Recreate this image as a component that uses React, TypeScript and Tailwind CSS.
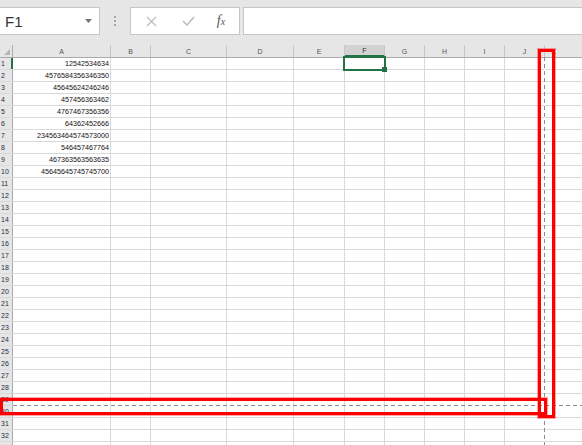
import React from "react";

const cols: { name: string; w: string }[] = [
  { name: "A", w: "w-[98px]" },
  { name: "B", w: "w-[40px]" },
  { name: "C", w: "w-[76px]" },
  { name: "D", w: "w-[67px]" },
  { name: "E", w: "w-[51px]" },
  { name: "F", w: "w-[40px]" },
  { name: "G", w: "w-[40px]" },
  { name: "H", w: "w-[40px]" },
  { name: "I", w: "w-[40px]" },
  { name: "J", w: "w-[40px]" },
];

const data: Record<number, string> = {
  1: "12542534634",
  2: "4576584356346350",
  3: "45645624246246",
  4: "457456363462",
  5: "4767467356356",
  6: "64362452666",
  7: "234563464574573000",
  8: "546457467764",
  9: "467363563563635",
  10: "45645645745745700",
};

const rows = Array.from({ length: 33 }, (_, i) => i + 1);

export default function App() {
  return (
    <div className="relative w-[582px] h-[445px] overflow-hidden bg-white font-['Liberation_Sans',Arial,sans-serif]">
      {/* Formula bar */}
      <div className="h-[45px] bg-[#e6e6e6] flex items-start pt-[7px]">
        <div className="w-[100px] h-[28px] bg-white border border-l-0 border-[#c6c6c6] flex items-center justify-between pl-[5px] pr-[7px]">
          <span className="text-[15px] leading-none text-[#333]">F1</span>
          <svg width="7" height="4" viewBox="0 0 7 4">
            <polygon points="0,0 7,0 3.5,4" fill="#777" />
          </svg>
        </div>
        <div className="w-[30px] h-[28px] flex flex-col items-center justify-center gap-[2px]">
          <div className="w-[2px] h-[2px] bg-[#a6a6a6]" />
          <div className="w-[2px] h-[2px] bg-[#a6a6a6]" />
          <div className="w-[2px] h-[2px] bg-[#a6a6a6]" />
        </div>
        <div className="w-[110px] h-[28px] bg-white border border-[#c6c6c6] flex items-center">
          <div className="w-[38px] flex justify-center pl-[2px]">
            <svg width="11" height="11" viewBox="0 0 11 11">
              <path d="M1 1 L10 10 M10 1 L1 10" stroke="#bdbdbd" strokeWidth="1.3" />
            </svg>
          </div>
          <div className="w-[38px] flex justify-center">
            <svg width="13" height="10" viewBox="0 0 13 10">
              <path d="M1 5 L5 9 L12 1" stroke="#bdbdbd" strokeWidth="1.6" fill="none" />
            </svg>
          </div>
          <div className="flex-1 flex justify-center pr-[4px]">
            <span className="font-['Liberation_Serif',serif] italic text-[14px] leading-none text-[#555]">
              f<span className="text-[10px]">x</span>
            </span>
          </div>
        </div>
        <div className="ml-[3px] flex-1 h-[28px] bg-white border border-r-0 border-[#c6c6c6]" />
      </div>

      {/* Column header row */}
      <div className="flex h-[13px] bg-[#e6e6e6] border-b border-[#ababab]">
        <div className="w-[13px] h-full border-r border-[#ababab] flex items-end justify-end pr-[2px] pb-[2px]">
          <svg width="6" height="6" viewBox="0 0 6 6">
            <polygon points="6,0 6,6 0,6" fill="#b5b5b5" />
          </svg>
        </div>
        {cols.map((c) => (
          <div
            key={c.name}
            className={`${c.w} h-full border-r border-[#c6c6c6] flex items-center justify-center text-[7px] leading-none ${
              c.name === "F" ? "bg-[#d2d2d2] text-[#333] border-b-2 border-b-[#217346]" : "text-[#555]"
            }`}
          >
            {c.name}
          </div>
        ))}
        <div className="flex-1 h-full flex items-center justify-center text-[7px] leading-none text-[#555] pr-[20px]">
          K
        </div>
      </div>

      {/* Rows */}
      {rows.map((r) => (
        <div key={r} className="flex h-[12px] border-b border-[#d9d9d9]">
          <div
            className={`w-[13px] h-full bg-[#e6e6e6] border-r flex items-center pl-[1px] text-[7px] leading-none text-[#1f2f4a] ${
              r === 1 ? "border-r-[#217346] border-r-2" : "border-[#ababab]"
            }`}
          >
            {r <= 32 ? r : ""}
          </div>
          {cols.map((c) => (
            <div
              key={c.name}
              className={`${c.w} h-full border-r border-[#d9d9d9] flex items-center justify-end pr-[1px] text-[7.2px] leading-none text-[#111] whitespace-nowrap`}
            >
              {c.name === "A" ? data[r] ?? "" : ""}
            </div>
          ))}
          <div className="flex-1 h-full" />
        </div>
      ))}

      {/* Selection on F1 */}
      <div className="absolute left-[343px] top-[56px] w-[43px] h-[15px] border-2 border-[#217346]" />
      <div className="absolute left-[382px] top-[67px] w-[5px] h-[5px] bg-[#217346]" />

      {/* Page break dashed lines */}
      <div className="absolute left-[544px] top-[57px] w-[1px] h-[388px] bg-[repeating-linear-gradient(180deg,#8c8c8c_0_4px,#ffffff_4px_7px)]" />
      <div className="absolute left-[13px] top-[405px] w-[569px] h-[1px] bg-[repeating-linear-gradient(90deg,#8c8c8c_0_4px,#ffffff_4px_7px)]" />

      {/* Red highlight boxes */}
      <div className="absolute left-[538px] top-[49px] w-[17px] h-[369px] border-[3px] border-[#ff0000] shadow-[0_0_0_1px_rgba(255,0,0,0.35)]" />
      <div className="absolute left-[0px] top-[398px] w-[547px] h-[17px] border-[3px] border-[#ff0000] shadow-[0_0_0_1px_rgba(255,0,0,0.35)]" />
    </div>
  );
}
